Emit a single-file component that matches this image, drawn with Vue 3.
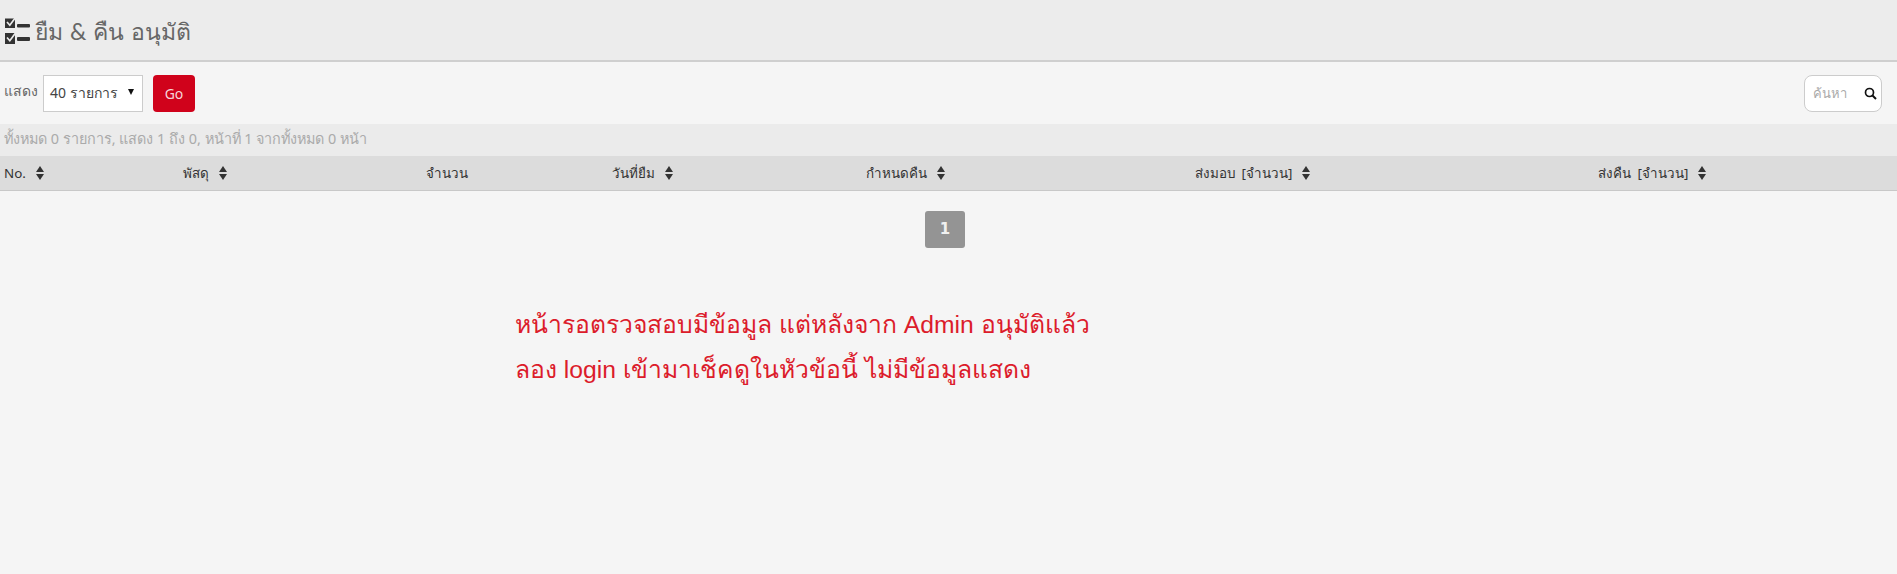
<script setup>
const columns = [
  { label: 'No.', sort: true },
  { label: 'พัสดุ', sort: true },
  { label: 'จำนวน', sort: false },
  { label: 'วันที่ยืม', sort: true },
  { label: 'กำหนดคืน', sort: true },
  { label: 'ส่งมอบ [จำนวน]', sort: true },
  { label: 'ส่งคืน [จำนวน]', sort: true },
]
</script>

<template>
  <div class="page">
    <header class="title-bar">
      <svg class="list-icon" width="27" height="28" viewBox="0 0 27 28">
        <path d="M1 2.5h10v9.5H1z" fill="#333" />
        <path d="M1 17h10v11H1z" fill="#333" />
        <path d="M3 6l2.8 3.2L11.5 1.500" fill="none" stroke="#ececec" stroke-width="1.7" />
        <path d="M3 21.500l2.800 3.200 5.700-7.700" fill="none" stroke="#ececec" stroke-width="1.7" />
        <rect x="13" y="8" width="13" height="3.500" rx="1" fill="#333" />
        <rect x="13" y="21" width="13" height="4" rx="1" fill="#333" />
      </svg>
      <h1>ยืม &amp; คืน อนุมัติ</h1>
    </header>

    <div class="toolbar">
      <div class="length">
        <span class="show-label">แสดง</span>
        <div class="select">
          <span>40 รายการ</span>
          <i class="caret"></i>
        </div>
        <button class="go">Go</button>
      </div>
      <div class="search">
        <span class="placeholder">ค้นหา</span>
        <svg width="13" height="13" viewBox="0 0 13 13">
          <circle cx="5.5" cy="5.5" r="4" fill="none" stroke="#111" stroke-width="1.7" />
          <path d="M8.5 8.5l3.500 3.500" stroke="#111" stroke-width="2" />
        </svg>
      </div>
    </div>

    <div class="info">ทั้งหมด 0 รายการ, แสดง 1 ถึง 0, หน้าที่ 1 จากทั้งหมด 0 หน้า</div>

    <div class="thead">
      <div v-for="c in columns" :key="c.label" class="th">
        <span>{{ c.label }}</span>
        <span v-if="c.sort" class="sort"><i class="up"></i><i class="down"></i></span>
      </div>
    </div>

    <div class="pager"><span class="page-btn">1</span></div>

    <div class="note">
      <p>หน้ารอตรวจสอบมีข้อมูล แต่หลังจาก Admin อนุมัติแล้ว</p>
      <p>ลอง login เข้ามาเช็คดูในหัวข้อนี้ ไม่มีข้อมูลแสดง</p>
    </div>
  </div>
</template>

<style>
html, body { margin: 0; background: #f5f5f5; }
</style>

<style scoped>
.page {
  width: 1897px;
  height: 574px;
  overflow: hidden;
  background: #f5f5f5;
  font-family: "Noto Sans", "Liberation Sans", sans-serif;
  color: #333;
}
.title-bar {
  height: 60px;
  background: #ececec;
  border-bottom: 2px solid #cfcfcf;
  display: flex;
  align-items: center;
  padding-left: 4px;
  gap: 4px;
}
h1 {
  margin: 4px 0 0;
  font-size: 23px;
  font-weight: 400;
  color: #666;
  word-spacing: 1px;
  font-family: "Lato", "Noto Sans", sans-serif;
}
.toolbar {
  height: 62px;
  display: flex;
  align-items: center;
  justify-content: space-between;
  padding: 0 15px 0 4px;
}
.length { display: flex; align-items: center; }
.show-label { font-size: 14px; color: #666; margin-right: 5px; margin-top: -4px; }
.select {
  width: 100px;
  height: 37px;
  box-sizing: border-box;
  background: #fff;
  border: 1px solid #ccc;
  display: flex;
  align-items: center;
  justify-content: space-between;
  padding: 0 8px 0 6px;
  font-size: 14px;
  color: #444;
}
.caret {
  width: 0;
  height: 0;
  border-left: 3px solid transparent;
  border-right: 3px solid transparent;
  border-top: 6px solid #111;
  margin-top: -2px;
}
.go {
  width: 42px;
  height: 37px;
  margin-left: 10px;
  border: none;
  border-radius: 4px;
  background: #d0021b;
  color: #f6d5d8;
  font: 14px "Noto Sans", sans-serif;
  padding: 0;
}
.search {
  width: 78px;
  height: 37px;
  box-sizing: border-box;
  background: #fff;
  border: 1px solid #ccc;
  border-radius: 8px;
  display: flex;
  align-items: center;
  justify-content: space-between;
  padding: 0 4px 0 8px;
}
.placeholder { font-size: 13px; color: #aaa; }
.info {
  height: 32px;
  line-height: 30px;
  background: #ebebeb;
  padding-left: 4px;
  font-size: 14.4px;
  color: #aaa;
  white-space: nowrap;
}
.thead {
  height: 35px;
  box-sizing: border-box;
  background: #dcdcdc;
  border-bottom: 1px solid #c8c8c8;
  display: grid;
  grid-template-columns: 179px 243px 186px 254px 329px 403px 1fr;
  padding-left: 4px;
  align-items: center;
  font-size: 13.4px;
  word-spacing: 3px;
  color: #333;
}
.th { display: flex; align-items: center; gap: 10px; white-space: nowrap; }
.sort { display: flex; flex-direction: column; gap: 2px; }
.up, .down {
  width: 0;
  height: 0;
  border-left: 4px solid transparent;
  border-right: 4px solid transparent;
}
.up { border-bottom: 6px solid #333; }
.down { border-top: 6px solid #333; }
.pager {
  display: flex;
  justify-content: center;
  padding: 20px 7px 0 0;
}
.page-btn {
  width: 40px;
  height: 37px;
  background: #949494;
  border-radius: 3px;
  color: #f0f0f0;
  font: bold 15px/37px "DejaVu Sans", sans-serif;
  text-align: center;
}
.note {
  margin: 54px 0 0 515px;
  font-family: "Liberation Sans", "Noto Sans", sans-serif;
  font-size: 24.7px;
  line-height: 45px;
  color: #dc1c2b;
}
.note p { margin: 0; white-space: nowrap; }
</style>
